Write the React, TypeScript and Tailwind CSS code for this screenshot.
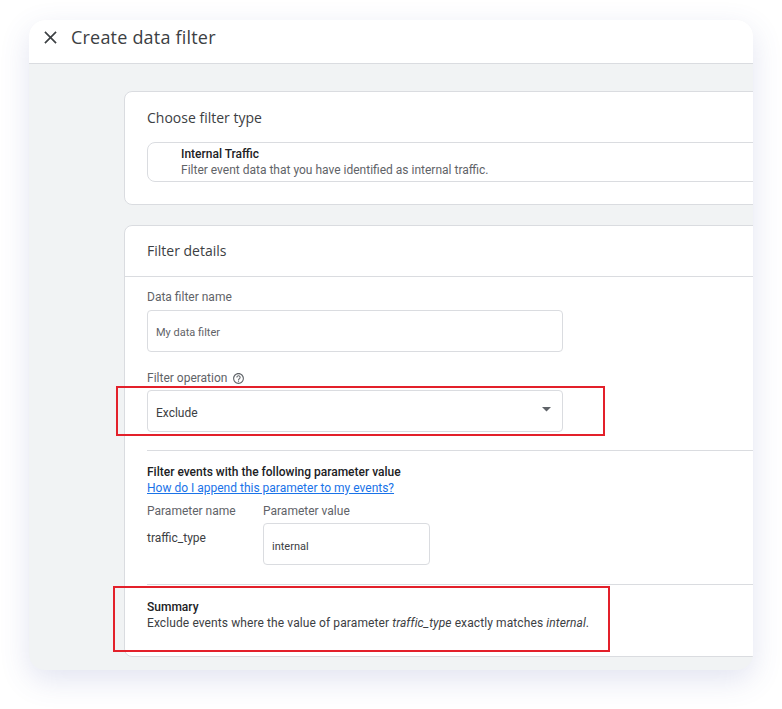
import React from "react";

const sans = { fontFamily: "Roboto, 'Liberation Sans', sans-serif" };
const title = { fontFamily: "'Open Sans', Roboto, sans-serif" };

function HelpIcon() {
  return (
    <svg width="13" height="13" viewBox="0 0 24 24" className="ml-[5px]" fill="#5f6368">
      <path d="M11 18h2v-2h-2v2zm1-16C6.48 2 2 6.48 2 12s4.48 10 10 10 10-4.48 10-10S17.52 2 12 2zm0 18c-4.41 0-8-3.59-8-8s3.59-8 8-8 8 3.59 8 8-3.59 8-8 8zm0-14c-2.21 0-4 1.79-4 4h2c0-1.1.9-2 2-2s2 .9 2 2c0 2-3 1.75-3 5h2c0-2.25 3-2.5 3-5 0-2.21-1.79-4-4-4z" />
    </svg>
  );
}

export default function App() {
  return (
    <div className="w-[782px] h-[709px] bg-white overflow-hidden" style={sans}>
      <div className="ml-[29px] mt-[20px] w-[724px] h-[650px] rounded-[16px] overflow-hidden bg-[#f1f3f4] shadow-[0_10px_30px_rgba(72,84,170,0.16)] flex flex-col">
        {/* header */}
        <div className="h-[44px] shrink-0 bg-white border-b border-[#dadce0] flex items-start pl-[15px] pt-[8px]">
          <svg width="13" height="13" viewBox="0 0 14 14" className="mt-[3px]">
            <path d="M1 1L13 13M13 1L1 13" stroke="#3c4043" strokeWidth="1.8" />
          </svg>
          <span className="ml-[14px] text-[18px] text-[#3c4043] leading-[18px] tracking-[0.2px]" style={title}>
            Create data filter
          </span>
        </div>

        {/* body */}
        <div className="flex-1 pl-[95px] pt-[27px]">
          {/* card 1 */}
          <div className="w-[720px] h-[114px] bg-white border border-[#dadce0] rounded-[8px] pl-[22px] pt-[16px]">
            <div className="text-[14px] leading-[20px] text-[#3c4043]" style={title}>
              Choose filter type
            </div>
            <div className="mt-[14px] h-[40px] border border-[#dadce0] rounded-l-[8px] flex flex-col justify-center pl-[33px]">
              <div className="text-[12px] leading-[16px] font-medium text-[#202124]">Internal Traffic</div>
              <div className="text-[12px] leading-[16px] text-[#5f6368]">
                Filter event data that you have identified as internal traffic.
              </div>
            </div>
          </div>

          {/* card 2 */}
          <div className="mt-[20px] w-[720px] h-[432px] bg-white border border-[#dadce0] rounded-[8px]">
            <div className="h-[51px] border-b border-[#dadce0] pl-[22px] flex items-center">
              <span className="text-[14px] leading-[20px] text-[#3c4043]" style={title}>
                Filter details
              </span>
            </div>
            <div className="pl-[22px]">
              <div className="pt-[12px] text-[12px] leading-[16px] text-[#5f6368]">Data filter name</div>
              <div className="mt-[5px] w-[416px] h-[42px] border border-[#dadce0] rounded-[4px] flex items-center pl-[8px] text-[11px] text-[#5f6368]">
                <span className="mt-[4px]">My data filter</span>
              </div>
              <div className="mt-[18px] flex items-center text-[12px] leading-[16px] text-[#5f6368]">
                Filter operation
                <HelpIcon />
              </div>
              <div className="relative mt-[4px] w-[416px] h-[42px]">
                <div className="w-full h-full border border-[#dadce0] rounded-[4px] flex items-center pl-[8px] pr-[11px] justify-between text-[12px] text-[#3c4043]">
                  <span className="mt-[3px]">Exclude</span>
                  <svg width="9" height="5" viewBox="0 0 9 5" className="mt-[-4px]">
                    <path d="M0 0h9L4.5 4.5z" fill="#5f6368" />
                  </svg>
                </div>
                <div className="absolute left-[-31px] top-[-4px] w-[489px] h-[50px] border-2 border-[#e3202a]" />
              </div>

              <div className="mt-[18px] border-t border-[#dadce0] pt-[13px]">
                <div className="text-[12px] leading-[16px] font-medium text-[#202124]">
                  Filter events with the following parameter value
                </div>
                <a className="block text-[12px] leading-[16px] text-[#1a73e8] underline">
                  How do I append this parameter to my events?
                </a>
                <div className="mt-[7px] flex">
                  <div className="w-[116px]">
                    <div className="text-[12px] leading-[16px] text-[#5f6368]">Parameter name</div>
                    <div className="mt-[11px] text-[12px] leading-[16px] text-[#3c4043]">traffic_type</div>
                  </div>
                  <div>
                    <div className="text-[12px] leading-[16px] text-[#5f6368]">Parameter value</div>
                    <div className="mt-[4px] w-[167px] h-[42px] border border-[#dadce0] rounded-[4px] flex items-center pl-[8px] text-[11px] text-[#3c4043]">
                      <span className="mt-[6px]">internal</span>
                    </div>
                  </div>
                </div>
              </div>

              <div className="relative mt-[19px] border-t border-[#dadce0] pt-[14px]">
                <div className="text-[12px] leading-[16px] font-medium text-[#202124]">Summary</div>
                <div className="text-[12px] leading-[16px] text-[#3c4043] tracking-[0.1px]">
                  Exclude events where the value of parameter <i>traffic_type</i> exactly matches <i>internal</i>.
                </div>
                <div className="absolute left-[-34px] top-[1px] w-[497px] h-[66px] border-2 border-[#e3202a]" />
              </div>
            </div>
          </div>
        </div>
      </div>
    </div>
  );
}
